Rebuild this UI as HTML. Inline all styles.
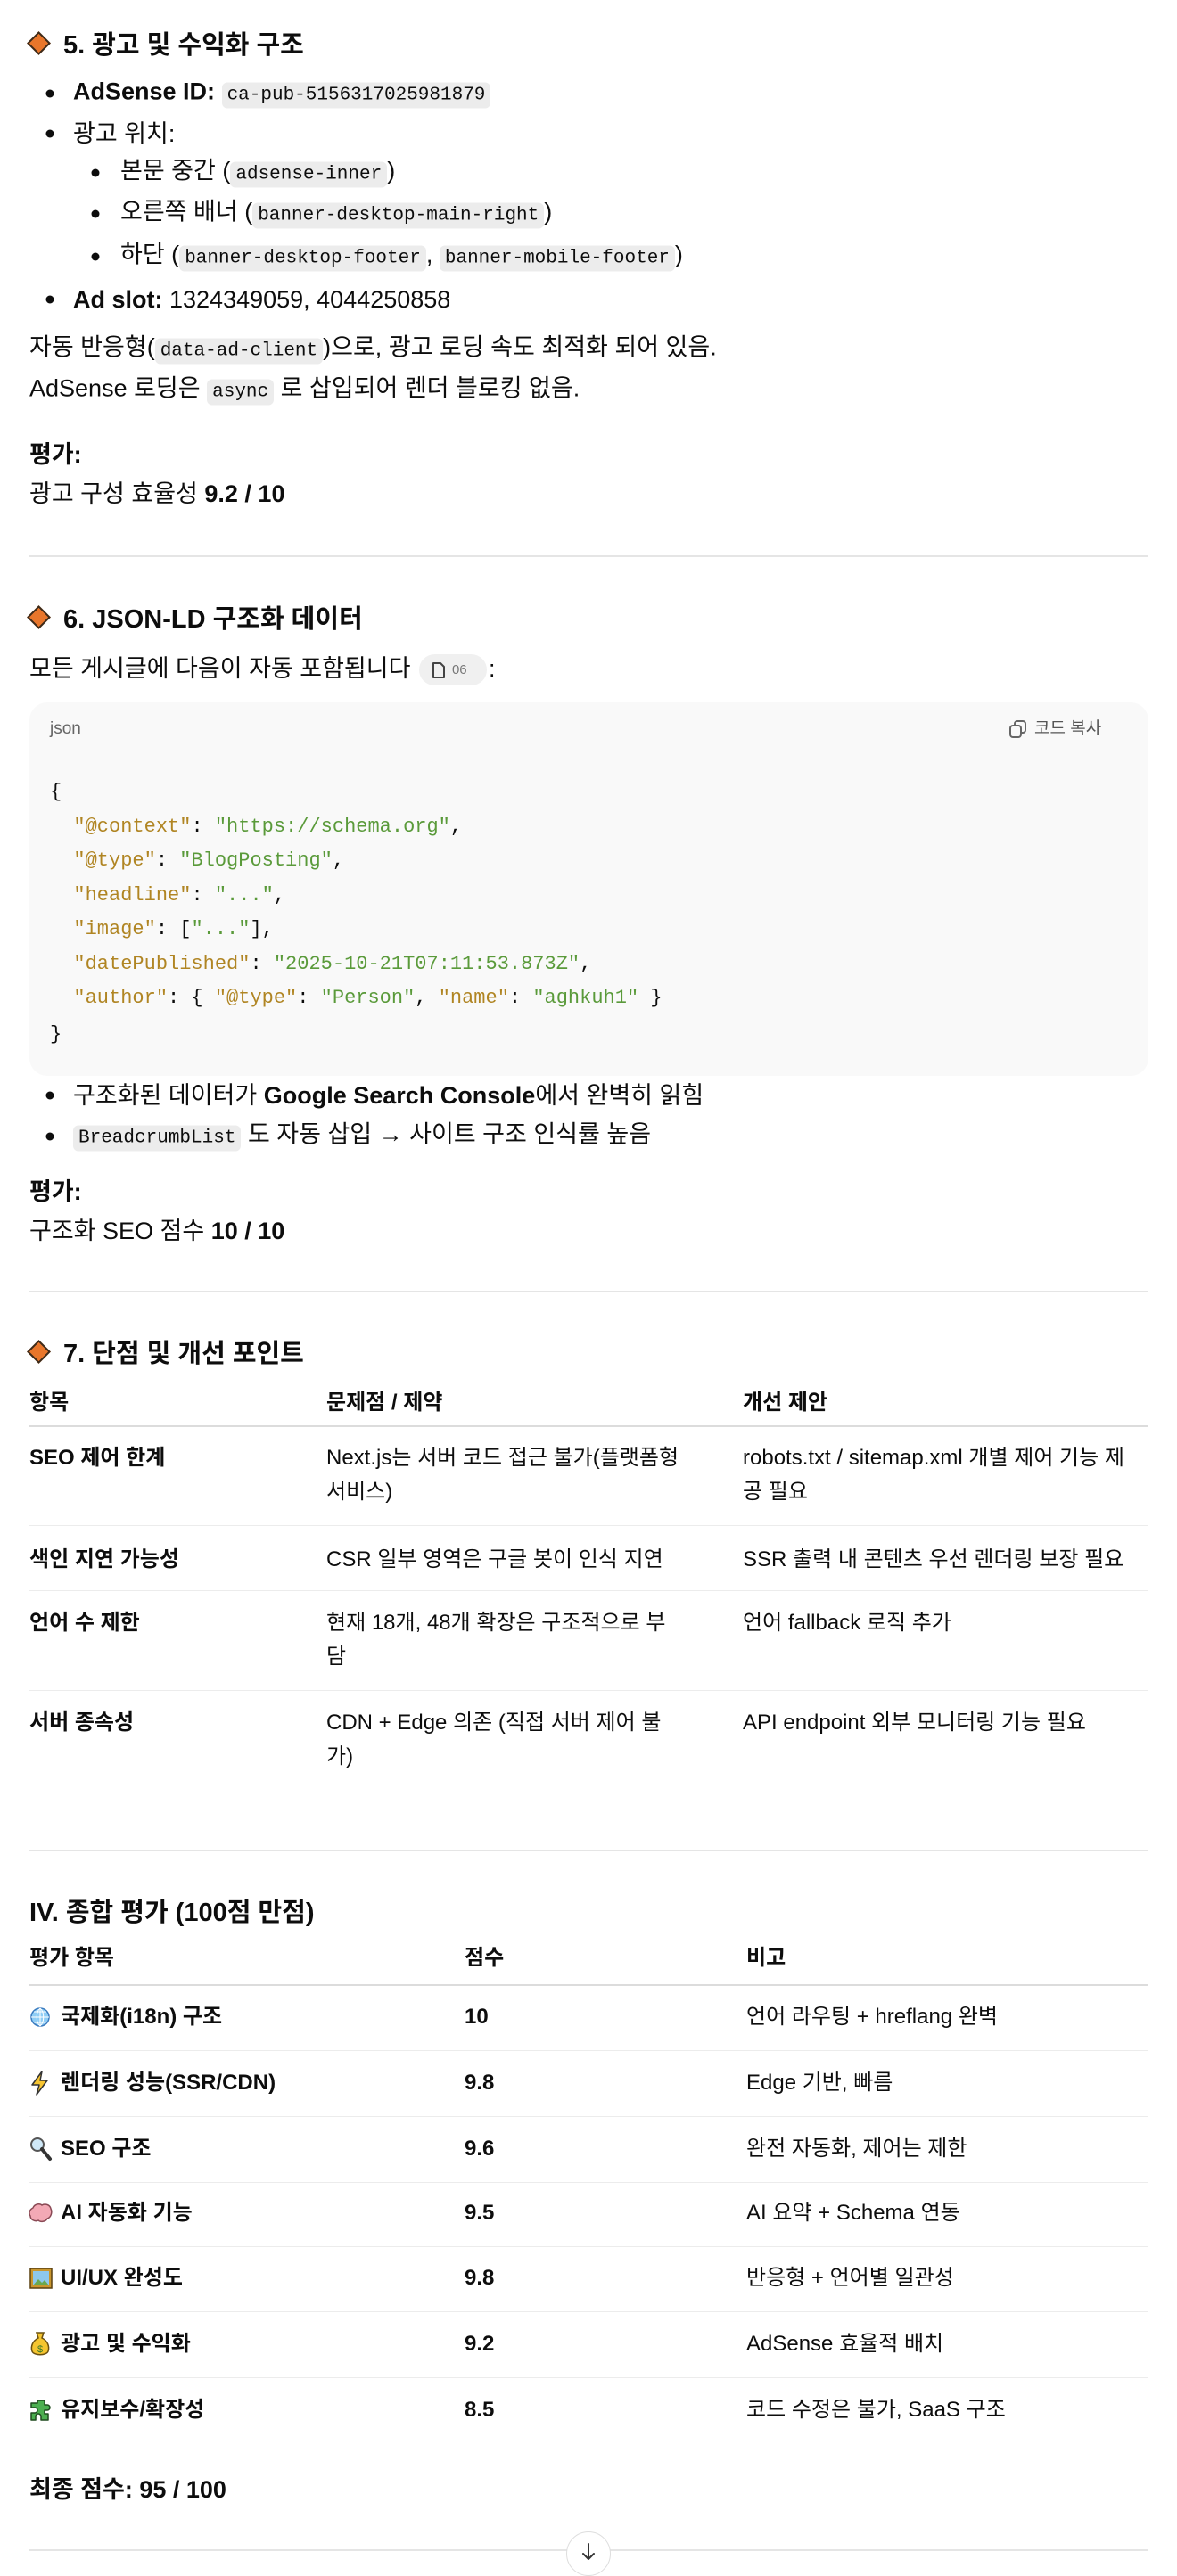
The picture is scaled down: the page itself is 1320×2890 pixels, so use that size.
<!DOCTYPE html>
<html><head><meta charset="utf-8"><style>
*{margin:0;padding:0;box-sizing:border-box}
body{width:1320px;height:2873px;background:#fff;position:relative;overflow:hidden;font-family:"Liberation Sans","Noto Sans CJK KR",sans-serif;color:#0d0d0d;font-size:27px}
.l{position:absolute;left:33px;white-space:nowrap;line-height:40px;transform:translateY(-50%)}
.h{font-size:29px;font-weight:bold}
.dia{display:inline-block;width:19px;height:19px;background:#e8762b;border:2px solid #3a2a1a;transform:rotate(45deg);margin:0 18px 0 6px;vertical-align:2px}
code{font-family:"Liberation Mono",monospace;font-size:21px;background:#ececec;border-radius:6px;padding:3px 6px}
.dot{position:absolute;width:9px;height:9px;border-radius:50%;background:#0d0d0d;transform:translate(-50%,-50%)}
.hr{position:absolute;left:33px;width:1255px;height:2px;background:#e5e5e5}
.cb{position:absolute;left:33px;top:788px;width:1255px;height:419px;background:#f9f9f9;border-radius:20px}
.mono{font-family:"Liberation Mono",monospace;font-size:22px;white-space:pre}
.k{color:#b08523}.s{color:#5a9a3a}
.t{font-size:24px}
.b{font-weight:bold}
.line{position:absolute;left:33px;width:1255px;height:1px;background:#ececec}
.icon{position:absolute;left:33px;transform:translateY(-50%)}
</style></head><body>

<div class="l h" style="top:51px;left:28px"><span class="dia"></span>5. 광고 및 수익화 구조</div>
<div class="dot" style="left:56px;top:105px"></div>
<div class="l" style="left:82px;top:105px"><b>AdSense ID:</b> <code>ca-pub-5156317025981879</code></div>
<div class="dot" style="left:56px;top:150px"></div>
<div class="l" style="left:82px;top:150px">광고 위치:</div>
<div class="dot" style="left:107px;top:194px"></div>
<div class="l" style="left:135px;top:194px">본문 중간 (<code>adsense-inner</code>)</div>
<div class="dot" style="left:107px;top:240px"></div>
<div class="l" style="left:135px;top:240px">오른쪽 배너 (<code>banner-desktop-main-right</code>)</div>
<div class="dot" style="left:107px;top:288px"></div>
<div class="l" style="left:135px;top:288px">하단 (<code>banner-desktop-footer</code>, <code>banner-mobile-footer</code>)</div>
<div class="dot" style="left:56px;top:336px"></div>
<div class="l" style="left:82px;top:336px"><b>Ad slot:</b> 1324349059, 4044250858</div>
<div class="l" style="top:392px">자동 반응형(<code>data-ad-client</code>)으로, 광고 로딩 속도 최적화 되어 있음.</div>
<div class="l" style="top:438px">AdSense 로딩은 <code>async</code> 로 삽입되어 렌더 블로킹 없음.</div>
<div class="l b" style="top:510px">평가:</div>
<div class="l" style="top:554px">광고 구성 효율성 <b>9.2 / 10</b></div>
<div class="hr" style="top:623px"></div>

<div class="l h" style="top:695px;left:28px"><span class="dia"></span>6. JSON-LD 구조화 데이터</div>
<div class="l" style="top:750px">모든 게시글에 다음이 자동 포함됩니다 <span style="display:inline-block;width:76px;height:35px;background:#f0f0f0;border-radius:18px;vertical-align:middle;position:relative;margin:0 2px"><svg style="position:absolute;left:14px;top:8px" width="16" height="20" viewBox="0 0 16 20"><path d="M2 2h8l4 4v12H2z" fill="none" stroke="#444" stroke-width="2" stroke-linejoin="round"/></svg><span style="position:absolute;left:37px;top:0;font-size:15px;line-height:35px;color:#777">06</span></span>:</div>
<div class="cb"></div>
<div class="l" style="left:56px;top:818px;font-size:19px;color:#666">json</div>
<svg style="position:absolute;left:1131px;top:807px" width="22" height="22" viewBox="0 0 22 22"><rect x="7" y="2" width="12" height="13" rx="3" fill="none" stroke="#666" stroke-width="2"/><rect x="2" y="7" width="12" height="13" rx="3" fill="#f9f9f9" stroke="#666" stroke-width="2"/></svg>
<div class="l" style="left:1160px;top:818px;font-size:19px;color:#555">코드 복사</div>
<div class="l mono" style="left:56px;top:889px">{</div>
<div class="l mono" style="left:56px;top:928px">  <span class="k">"@context"</span>: <span class="s">"https://schema.org"</span>,</div>
<div class="l mono" style="left:56px;top:966px">  <span class="k">"@type"</span>: <span class="s">"BlogPosting"</span>,</div>
<div class="l mono" style="left:56px;top:1005px">  <span class="k">"headline"</span>: <span class="s">"..."</span>,</div>
<div class="l mono" style="left:56px;top:1043px">  <span class="k">"image"</span>: [<span class="s">"..."</span>],</div>
<div class="l mono" style="left:56px;top:1082px">  <span class="k">"datePublished"</span>: <span class="s">"2025-10-21T07:11:53.873Z"</span>,</div>
<div class="l mono" style="left:56px;top:1120px">  <span class="k">"author"</span>: { <span class="k">"@type"</span>: <span class="s">"Person"</span>, <span class="k">"name"</span>: <span class="s">"aghkuh1"</span> }</div>
<div class="l mono" style="left:56px;top:1161px">}</div>
<div class="dot" style="left:56px;top:1229px"></div>
<div class="l" style="left:82px;top:1229px">구조화된 데이터가 <b>Google Search Console</b>에서 완벽히 읽힘</div>
<div class="dot" style="left:56px;top:1275px"></div>
<div class="l" style="left:82px;top:1275px"><code>BreadcrumbList</code> 도 자동 삽입 → 사이트 구조 인식률 높음</div>
<div class="l b" style="top:1337px">평가:</div>
<div class="l" style="top:1381px">구조화 SEO 점수 <b>10 / 10</b></div>
<div class="hr" style="top:1448px"></div>

<div class="l h" style="top:1519px;left:28px"><span class="dia"></span>7. 단점 및 개선 포인트</div>
<div class="l t b" style="top:1574px">항목</div>
<div class="l t b" style="left:366px;top:1574px">문제점 / 제약</div>
<div class="l t b" style="left:833px;top:1574px">개선 제안</div>
<div class="line" style="top:1599px;height:2px;background:#dcdcdc"></div>
<div class="l t b" style="top:1636px">SEO 제어 한계</div>
<div class="l t" style="left:366px;top:1636px">Next.js는 서버 코드 접근 불가(플랫폼형</div>
<div class="l t" style="left:366px;top:1674px">서비스)</div>
<div class="l t" style="left:833px;top:1636px">robots.txt / sitemap.xml 개별 제어 기능 제</div>
<div class="l t" style="left:833px;top:1674px">공 필요</div>
<div class="line" style="top:1711px"></div>
<div class="l t b" style="top:1750px">색인 지연 가능성</div>
<div class="l t" style="left:366px;top:1750px">CSR 일부 영역은 구글 봇이 인식 지연</div>
<div class="l t" style="left:833px;top:1750px">SSR 출력 내 콘텐츠 우선 렌더링 보장 필요</div>
<div class="line" style="top:1784px"></div>
<div class="l t b" style="top:1821px">언어 수 제한</div>
<div class="l t" style="left:366px;top:1821px">현재 18개, 48개 확장은 구조적으로 부</div>
<div class="l t" style="left:366px;top:1859px">담</div>
<div class="l t" style="left:833px;top:1821px">언어 fallback 로직 추가</div>
<div class="line" style="top:1896px"></div>
<div class="l t b" style="top:1933px">서버 종속성</div>
<div class="l t" style="left:366px;top:1933px">CDN + Edge 의존 (직접 서버 제어 불</div>
<div class="l t" style="left:366px;top:1971px">가)</div>
<div class="l t" style="left:833px;top:1933px">API endpoint 외부 모니터링 기능 필요</div>
<div class="hr" style="top:2075px"></div>

<div class="l h" style="top:2146px">IV. 종합 평가 (100점 만점)</div>
<div class="l t b" style="top:2197px">평가 항목</div>
<div class="l t b" style="left:521px;top:2197px">점수</div>
<div class="l t b" style="left:837px;top:2197px">비고</div>
<div class="line" style="top:2226px;height:2px;background:#dcdcdc"></div>

<svg class="icon" style="top:2263px" width="24" height="24" viewBox="0 0 24 24"><circle cx="12" cy="12" r="10" fill="#8fcdf5" stroke="#3a7bbf" stroke-width="1.5"/><path d="M2 12h20M12 2v20M5 6h14M5 18h14M12 2c-5 4-5 16 0 20M12 2c5 4 5 16 0 20" fill="none" stroke="#fff" stroke-width="1"/></svg>
<div class="l t b" style="left:68px;top:2263px">국제화(i18n) 구조</div>
<div class="l t b" style="left:521px;top:2263px">10</div>
<div class="l t" style="left:837px;top:2263px">언어 라우팅 + hreflang 완벽</div>
<div class="line" style="top:2300px"></div>

<svg class="icon" style="top:2337px" width="24" height="28" viewBox="0 0 24 28"><path d="M14 1L3 16h8l-3 11 12-16h-8z" fill="#f7c531" stroke="#333" stroke-width="1.5" stroke-linejoin="round"/></svg>
<div class="l t b" style="left:68px;top:2337px">렌더링 성능(SSR/CDN)</div>
<div class="l t b" style="left:521px;top:2337px">9.8</div>
<div class="l t" style="left:837px;top:2337px">Edge 기반, 빠름</div>
<div class="line" style="top:2374px"></div>

<svg class="icon" style="top:2411px" width="26" height="28" viewBox="0 0 26 28"><circle cx="9" cy="9" r="7" fill="#cfe8f7" stroke="#555" stroke-width="2"/><path d="M14 14l9 11" stroke="#333" stroke-width="4" stroke-linecap="round"/></svg>
<div class="l t b" style="left:68px;top:2411px">SEO 구조</div>
<div class="l t b" style="left:521px;top:2411px">9.6</div>
<div class="l t" style="left:837px;top:2411px">완전 자동화, 제어는 제한</div>
<div class="line" style="top:2448px"></div>

<svg class="icon" style="top:2483px" width="26" height="24" viewBox="0 0 26 24"><path d="M4 6c2-5 8-5 10-3 3-2 9-1 10 4 2 4 0 10-4 11-2 4-8 4-10 2-4 2-9-1-9-5-2-3-1-7 3-9z" fill="#f3a9b5" stroke="#8a4a55" stroke-width="1.5"/></svg>
<div class="l t b" style="left:68px;top:2483px">AI 자동화 기능</div>
<div class="l t b" style="left:521px;top:2483px">9.5</div>
<div class="l t" style="left:837px;top:2483px">AI 요약 + Schema 연동</div>
<div class="line" style="top:2520px"></div>

<svg class="icon" style="top:2556px" width="26" height="24" viewBox="0 0 26 24"><rect x="1" y="1" width="24" height="22" fill="#c9962e" stroke="#5a4010" stroke-width="1.5"/><rect x="4" y="4" width="18" height="16" fill="#8ec8ec"/><path d="M4 20l6-7 4 4 3-3 5 6z" fill="#6aa84f"/></svg>
<div class="l t b" style="left:68px;top:2556px">UI/UX 완성도</div>
<div class="l t b" style="left:521px;top:2556px">9.8</div>
<div class="l t" style="left:837px;top:2556px">반응형 + 언어별 일관성</div>
<div class="line" style="top:2593px"></div>

<svg class="icon" style="top:2630px" width="24" height="30" viewBox="0 0 24 30"><path d="M8 2h8l-2 6c6 3 9 9 7 15-2 5-16 5-18 0C1 17 4 11 10 8z" fill="#f5c530" stroke="#6a5010" stroke-width="1.5"/><text x="12" y="24" font-size="11" text-anchor="middle" fill="#3a7a2a" font-family="Liberation Sans">$</text></svg>
<div class="l t b" style="left:68px;top:2630px">광고 및 수익화</div>
<div class="l t b" style="left:521px;top:2630px">9.2</div>
<div class="l t" style="left:837px;top:2630px">AdSense 효율적 배치</div>
<div class="line" style="top:2667px"></div>

<svg class="icon" style="top:2704px" width="26" height="26" viewBox="0 0 26 26"><path d="M9 2h8v5h3a3 3 0 010 6h-3v4h4v7h-8v-4a3 3 0 00-6 0v4H2v-8h4a3 3 0 000-6H2V5h7z" fill="#4caf50" stroke="#1e4a1e" stroke-width="1.5" stroke-linejoin="round"/></svg>
<div class="l t b" style="left:68px;top:2704px">유지보수/확장성</div>
<div class="l t b" style="left:521px;top:2704px">8.5</div>
<div class="l t" style="left:837px;top:2704px">코드 수정은 불가, SaaS 구조</div>

<div class="l b" style="top:2793px">최종 점수: 95 / 100</div>
<div class="hr" style="top:2860px"></div>
<div style="position:absolute;left:635px;top:2840px;width:50px;height:50px;border-radius:50%;background:#fff;border:1.5px solid #ddd"></div>
<svg style="position:absolute;left:650px;top:2852px" width="20" height="22" viewBox="0 0 20 22"><path d="M10 2v17M4 13l6 6 6-6" fill="none" stroke="#333" stroke-width="2" stroke-linecap="round" stroke-linejoin="round"/></svg>
</body></html>
